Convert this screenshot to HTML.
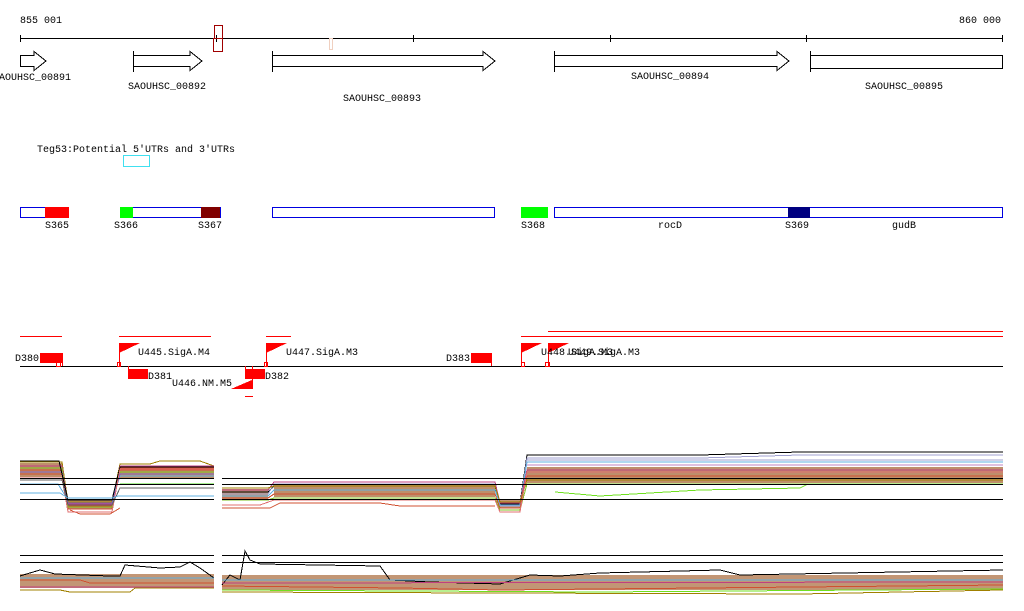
<!DOCTYPE html>
<html><head><meta charset="utf-8"><style>
html,body{margin:0;padding:0;background:#fff;width:1024px;height:611px;overflow:hidden}
svg text{font-family:"Liberation Mono","DejaVu Sans Mono",monospace;font-size:10px;fill:#000}
</style></head><body>
<svg width="1024" height="611" viewBox="0 0 1024 611" xmlns="http://www.w3.org/2000/svg" shape-rendering="crispEdges">
<text x="20" y="23">855 001</text>
<text x="1001" y="23" text-anchor="end">860 000</text>
<line x1="20" y1="38.5" x2="1003" y2="38.5" stroke="#000"/>
<g stroke="#000"><line x1="20.5" y1="35" x2="20.5" y2="42"/><line x1="216.5" y1="35" x2="216.5" y2="42"/><line x1="413.5" y1="35" x2="413.5" y2="42"/><line x1="610.5" y1="35" x2="610.5" y2="42"/><line x1="806.5" y1="35" x2="806.5" y2="42"/><line x1="1002.5" y1="35" x2="1002.5" y2="42"/></g>
<rect x="214.5" y="25.5" width="8" height="13" fill="none" stroke="#a00000"/>
<rect x="213.5" y="38.5" width="9" height="13" fill="none" stroke="#a00000"/>
<rect x="329.5" y="38.5" width="3" height="11" fill="none" stroke="#f0d0c0"/>
<g fill="#fff" stroke="#000">
<polygon points="20.5,55.5 34,55.5 34,51.5 46,61 34,70.5 34,66.5 20.5,66.5"/>
<polygon points="133.5,55.5 190,55.5 190,51.5 202,61 190,70.5 190,66.5 133.5,66.5"/>
<polygon points="272.5,55.5 483,55.5 483,51.5 495,61 483,70.5 483,66.5 272.5,66.5"/>
<polygon points="554.5,55.5 777,55.5 777,51.5 789,61 777,70.5 777,66.5 554.5,66.5"/>
<rect x="810.5" y="55.5" width="192" height="13"/>
<line x1="133.5" y1="51" x2="133.5" y2="72"/><line x1="272.5" y1="51" x2="272.5" y2="72"/><line x1="554.5" y1="51" x2="554.5" y2="72"/><line x1="810.5" y1="51" x2="810.5" y2="72"/>
</g>
<text x="-1" y="80">AOUHSC_00891</text>
<text x="128" y="89">SAOUHSC_00892</text>
<text x="343" y="101">SAOUHSC_00893</text>
<text x="631" y="79">SAOUHSC_00894</text>
<text x="865" y="89">SAOUHSC_00895</text>
<text x="37" y="152">Teg53:Potential 5'UTRs and 3'UTRs</text>
<rect x="123.5" y="155.5" width="26" height="11" fill="none" stroke="#40e0f0"/>
<g stroke="#0000e0" fill="#fff">
<rect x="20.5" y="207.5" width="48" height="10"/>
<rect x="120.5" y="207.5" width="100" height="10"/>
<rect x="272.5" y="207.5" width="222" height="10"/>
<rect x="554.5" y="207.5" width="448" height="10"/>
</g>
<rect x="45" y="207" width="24" height="11" fill="#f00"/>
<rect x="120" y="207" width="13" height="11" fill="#0f0"/>
<rect x="201" y="207" width="19" height="11" fill="#800000"/>
<rect x="521" y="207" width="27" height="11" fill="#0f0"/>
<rect x="788" y="207" width="22" height="11" fill="#000080"/>
<text x="45" y="228">S365</text><text x="114" y="228">S366</text><text x="198" y="228">S367</text>
<text x="521" y="228">S368</text><text x="658" y="228">rocD</text><text x="785" y="228">S369</text><text x="892" y="228">gudB</text>
<g stroke="#f00">
<line x1="20" y1="336.5" x2="62" y2="336.5"/><line x1="119" y1="336.5" x2="211" y2="336.5"/>
<line x1="266" y1="336.5" x2="291" y2="336.5"/><line x1="521" y1="336.5" x2="1003" y2="336.5"/>
<line x1="548" y1="331.5" x2="1003" y2="331.5"/>
</g>
<line x1="20" y1="366.5" x2="1003" y2="366.5" stroke="#000"/>
<g fill="#f00">
<rect x="40" y="353" width="22" height="10"/><rect x="471" y="353" width="20" height="10"/>
<rect x="128" y="369" width="20" height="10"/><rect x="245" y="369" width="20" height="10"/>
<polygon points="119,343 140,343 119,353"/><polygon points="266,343 287,343 266,353"/>
<polygon points="521,343 542,343 521,353"/><polygon points="548,343 569,343 548,353"/>
<polygon points="252,380 252,389 231,389"/>
<rect x="245" y="396" width="8" height="1"/>
</g>
<g stroke="#f00" fill="none">
<line x1="62.5" y1="353" x2="62.5" y2="366"/><line x1="491.5" y1="353" x2="491.5" y2="366"/>
<line x1="119.5" y1="343" x2="119.5" y2="366"/><line x1="266.5" y1="343" x2="266.5" y2="366"/>
<line x1="521.5" y1="343" x2="521.5" y2="366"/><line x1="548.5" y1="343" x2="548.5" y2="366"/>
<line x1="128.5" y1="366" x2="128.5" y2="379"/><line x1="245.5" y1="366" x2="245.5" y2="379"/><line x1="252.5" y1="366" x2="252.5" y2="389"/>
<rect x="56.5" y="362.5" width="4" height="4"/><rect x="117.5" y="362.5" width="3" height="4"/><rect x="264.5" y="362.5" width="3" height="4"/><rect x="521.5" y="362.5" width="3" height="4"/><rect x="545.5" y="362.5" width="4" height="4"/>
</g>
<text x="15" y="361">D380</text><text x="138" y="355">U445.SigA.M4</text><text x="148" y="379">D381</text>
<text x="172" y="386">U446.NM.M5</text><text x="265" y="379">D382</text><text x="286" y="355">U447.SigA.M3</text>
<text x="446" y="361">D383</text><text x="541" y="355">U448.SigA.M3</text><text x="568" y="355">U449.SigA.M3</text>
<!-- bands -->
<rect x="20" y="463" width="42" height="14" fill="#a86a3a" opacity="0.75"/>
<rect x="120" y="466" width="94" height="12" fill="#a86a3a" opacity="0.75"/>
<rect x="68" y="500" width="44" height="9" fill="#a86a3a" opacity="0.75"/>
<rect x="274" y="484" width="221" height="13" fill="#a86a3a" opacity="0.75"/>
<rect x="527" y="467" width="476" height="16" fill="#a86a3a" opacity="0.75"/>
<rect x="222" y="489" width="46" height="10" fill="#a86a3a" opacity="0.7"/>
<rect x="500" y="500" width="20" height="8" fill="#a86a3a" opacity="0.7"/>
<g fill="none">
<g stroke="#d05030"><path d="M20 470H62L68 506H112L120 470H214"/><path d="M20 474H62L68 509H112L120 468H214"/><path d="M70 510L80 514H110L120 508"/></g>
<path d="M20 462H62L68 502H112L120 464H150L160 461H200L214 466" stroke="#a08000"/>
<path d="M20 466H62L68 504H112L120 466H214" stroke="#c04080"/>
<path d="M20 484H58L68 500H112L120 476H214" stroke="#60b0e0"/>
<path d="M20 468H62L68 507H112L120 472H214" stroke="#80c020"/>
<path d="M20 472H62L68 503H112L120 474H214" stroke="#8060c0"/>
<path d="M20 461H59L68 500H112L120 467H214" stroke="#000"/>
<path d="M20 478H62L68 512H112L120 469H214" stroke="#e07070"/>
<path d="M20 480H62L68 505H112L120 488H214" stroke="#606060"/>
<path d="M20 493H60L68 498H112L118 496H214" stroke="#60b0e0"/>
<path d="M120 484H214" stroke="#50e020"/>
<path d="M222 492H268L274 486H495L500 504H520L527 455H700L800 452H1003" stroke="#000"/>
<path d="M222 494H268L274 484H495L500 506H520L527 458H700L800 455H1003" stroke="#a0a0d0"/>
<path d="M222 496H268L274 490H495L500 505H520L527 462H1003" stroke="#60b0e0"/>
<path d="M222 490H268L274 482H495L500 503H520L527 470H1003" stroke="#c04080"/>
<path d="M222 498H268L274 494H495L500 508H520L527 476H1003" stroke="#d05030"/>
<path d="M222 488H268L274 486H495L500 502H520L527 480H1003" stroke="#a08000"/>
<path d="M222 500H268L274 498H495L500 510H520L527 484H1003" stroke="#80c020"/>
<path d="M555 492L600 496L700 490L800 488L808 484H1003" stroke="#70e020"/>
<path d="M222 505H260L274 500H495L500 512H520L527 472H1003" stroke="#e07070"/>
<path d="M222 508H270L280 503H380L400 506H495" stroke="#d05030"/>
<path d="M527 465H1003" stroke="#c080c0"/>
<path d="M527 460H1003" stroke="#a0a0d0"/>
</g>
<g stroke="#000"><line x1="20" y1="478.5" x2="214" y2="478.5"/><line x1="20" y1="484.5" x2="214" y2="484.5"/><line x1="20" y1="499.5" x2="214" y2="499.5"/>
<line x1="222" y1="478.5" x2="1003" y2="478.5"/><line x1="222" y1="484.5" x2="1003" y2="484.5"/><line x1="222" y1="499.5" x2="1003" y2="499.5"/>
<line x1="20" y1="555.5" x2="214" y2="555.5"/><line x1="20" y1="562.5" x2="214" y2="562.5"/>
<line x1="222" y1="555.5" x2="1003" y2="555.5"/><line x1="222" y1="562.5" x2="1003" y2="562.5"/></g>
<rect x="20" y="574" width="194" height="14" fill="#a86a3a" opacity="0.7"/>
<rect x="222" y="575" width="781" height="15" fill="#a86a3a" opacity="0.7"/>
<g fill="none">
<path d="M20 576L40 570L55 574L110 576H120L125 565L160 568L180 567L190 562L200 568L214 578" stroke="#000"/>
<path d="M20 580H80L90 583H214" stroke="#d05030"/><path d="M20 590H60L70 592H130L135 588H214" stroke="#a08000"/>
<path d="M20 578H214" stroke="#60b0e0"/><path d="M20 587H214" stroke="#c04080"/>
<path d="M222 585L230 575L240 580L245 551L250 560L260 564L380 566L390 580L430 582L500 584L530 575L560 576L600 573L720 570L740 575L1003 570" stroke="#000"/>
<path d="M222 580H1003" stroke="#60b0e0"/><path d="M222 586L400 588L500 590L1003 585" stroke="#d05030"/>
<path d="M222 592L500 593L800 594L1003 590" stroke="#a08000"/><path d="M222 583L1003 582" stroke="#c04080"/>
<path d="M222 590L600 592L1003 589" stroke="#70e020"/>
</g>
</svg>
</body></html>
